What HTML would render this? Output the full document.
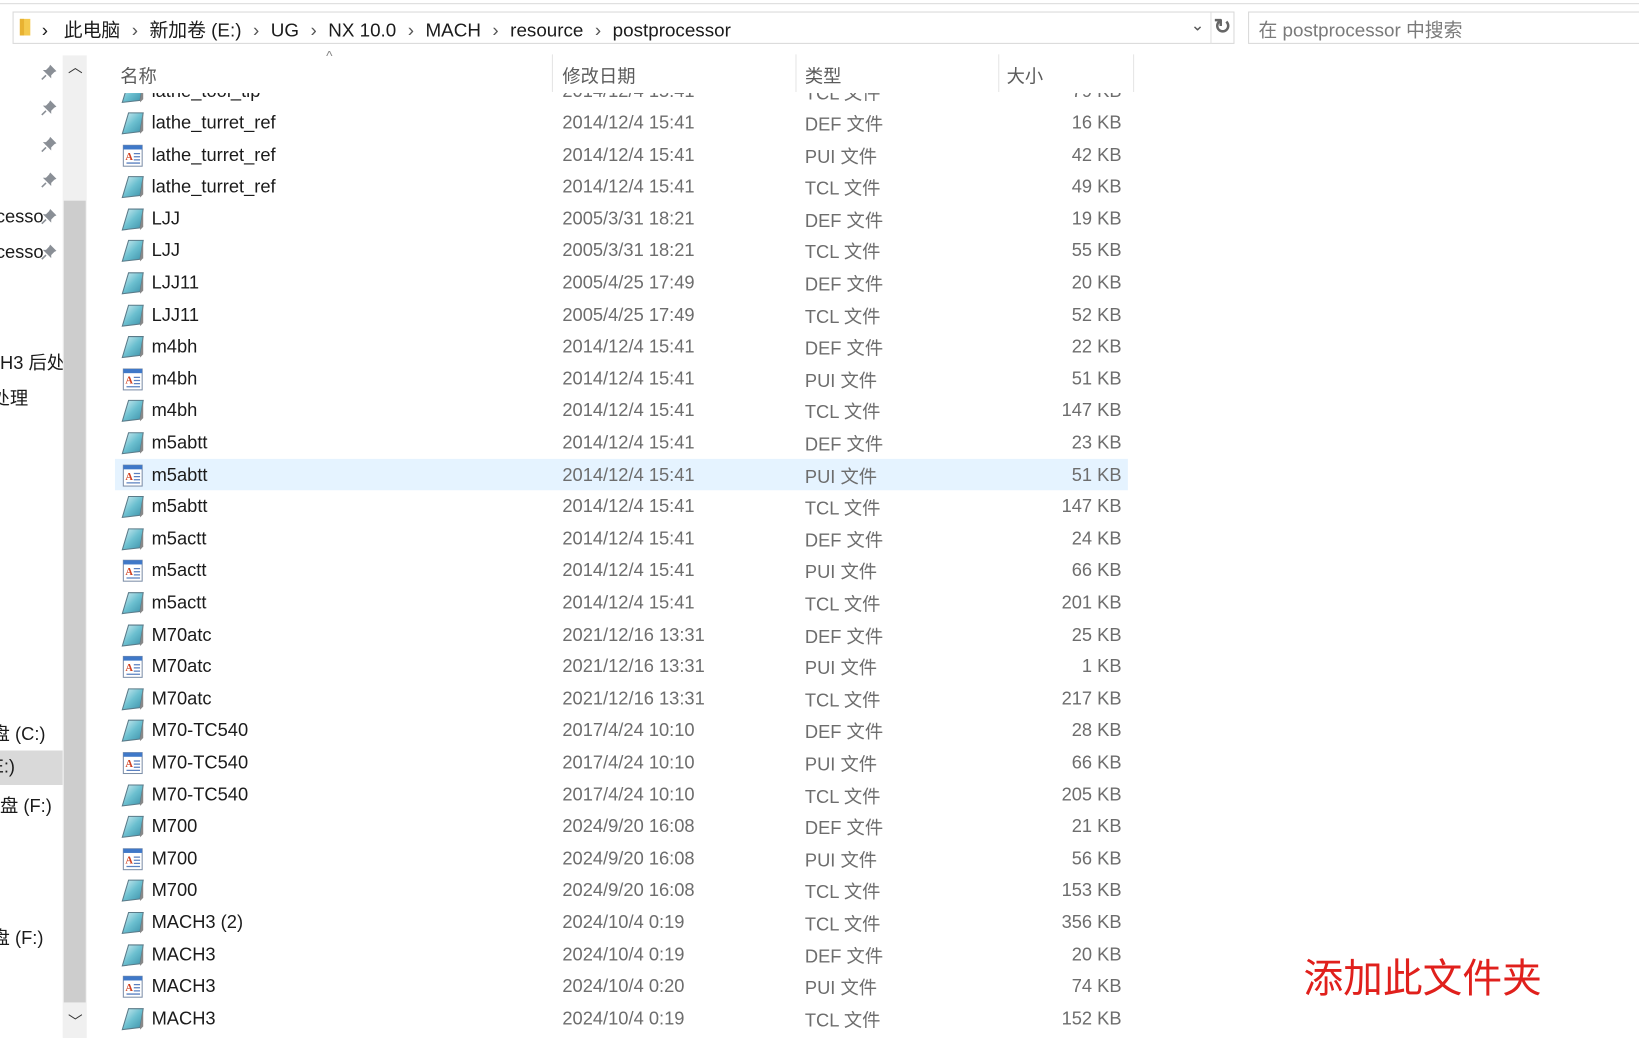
<!DOCTYPE html>
<html><head><meta charset="utf-8"><style>
html,body{margin:0;padding:0;background:#fff;overflow:hidden;width:1639px;height:1051px}
#w{position:absolute;left:0;top:0;width:1568px;height:1005px;overflow:hidden;transform:scale(1.04528);transform-origin:0 0;font-family:"Liberation Sans","Noto Sans CJK SC",sans-serif;}
.a{position:absolute;white-space:nowrap}
.r{position:absolute;left:0;width:1100px;height:30px;font-size:17.5px}
.r .n{position:absolute;left:145px;top:5px;color:#1b1b1b}
.r .d{position:absolute;left:538px;top:5px;color:#6d6d6d}
.r .t{position:absolute;left:770px;top:4px;color:#6d6d6d}
.r .s{position:absolute;right:27px;top:5px;color:#6d6d6d;text-align:right}
.r svg{position:absolute;left:115px;top:5px}
.sel{background:#e5f3ff;left:110px!important;width:969px!important}
.sel .n{left:35px}.sel .d{left:428px}.sel .t{left:660px}.sel svg{left:5px}.sel .s{right:6px}
.nav{position:absolute;left:0;font-size:17.5px;color:#1b1b1b}
.h{position:absolute;top:60px;font-size:17.5px;color:#5b5b5b}
</style></head><body><div id="w">
<svg width="0" height="0" style="position:absolute"><defs>
<symbol id="tc" viewBox="0 0 24 22"><linearGradient id="g1" x1="0" y1="0" x2="1" y2="1"><stop offset="0" stop-color="#d8f0f4"/><stop offset="0.5" stop-color="#6cc0d0"/><stop offset="1" stop-color="#3a8fa8"/></linearGradient><path d="M8 1 L22 1 L19 19 L2 21 Z" fill="url(#g1)" stroke="#5a7a88" stroke-width="1"/><path d="M22 1 L22 18 L19 21 L19 19Z" fill="#888"/></symbol>
<symbol id="pu" viewBox="0 0 22 22"><rect x="2" y="1" width="18" height="20" fill="#fff" stroke="#7d8fa8"/><rect x="2" y="1" width="18" height="4" fill="#3f78c8"/><text x="4" y="15" font-size="10" font-family="Liberation Serif" fill="#d04020" font-weight="bold">A</text><path d="M12 9h6M12 12h6M12 15h6M5 18h13" stroke="#5a80c0" stroke-width="1.2"/></symbol>
<symbol id="pin" viewBox="0 0 16 16"><path d="M9 1 L15 7 L13 8 L10 11 L10 14 L2 6 L5 6 L8 3 Z" fill="#8a8f96"/><path d="M5 11 L1 15" stroke="#8a8f96" stroke-width="1.5"/></symbol>
</defs></svg>
<div class="a" style="left:0;top:3px;width:1568px;height:1px;background:#dcdcdc"></div>
<div class="a" style="left:12px;top:11px;width:1169px;height:31px;border:1px solid #d9d9d9;box-sizing:border-box"></div>
<div class="a" style="left:1158px;top:12px;width:1px;height:30px;background:#e0e0e0"></div>
<div class="a" style="left:1194px;top:11px;width:380px;height:31px;border:1px solid #d9d9d9;box-sizing:border-box"></div>
<svg class="a" style="left:17px;top:16px" width="16" height="20"><path d="M2 2h10v16H2z" fill="#f4c94e"/><path d="M2 2h4v16H2z" fill="#e8b232"/></svg>
<div class="a" style="left:40px;top:15px;font-size:18px;color:#1b1b1b">› <span style="margin-left:10px">此电脑</span> <span style="color:#555;margin:0 6px">›</span> 新加卷 (E:) <span style="color:#555;margin:0 6px">›</span> UG <span style="color:#555;margin:0 6px">›</span> NX 10.0 <span style="color:#555;margin:0 6px">›</span> MACH <span style="color:#555;margin:0 6px">›</span> resource <span style="color:#555;margin:0 6px">›</span> postprocessor</div>
<div class="a" style="left:1139px;top:14px;font-size:16px;color:#555">⌄</div>
<div class="a" style="left:1161px;top:13px;font-size:20px;color:#666;font-weight:bold">↻</div>
<div class="a" style="left:1204px;top:15px;font-size:18px;color:#7a7a7a">在 postprocessor 中搜索</div>
<!-- nav -->
<div class="nav" style="top:197px;left:-4px">cesso</div><div class="nav" style="top:231px;left:-4px">cesso</div>
<svg class="a" style="left:39px;top:61px" width="16" height="16"><use href="#pin"/></svg>
<svg class="a" style="left:39px;top:95px" width="16" height="16"><use href="#pin"/></svg>
<svg class="a" style="left:39px;top:130px" width="16" height="16"><use href="#pin"/></svg>
<svg class="a" style="left:39px;top:164px" width="16" height="16"><use href="#pin"/></svg>
<svg class="a" style="left:39px;top:199px" width="16" height="16"><use href="#pin"/></svg>
<svg class="a" style="left:39px;top:233px" width="16" height="16"><use href="#pin"/></svg>
<div class="a" style="left:0;top:718px;width:60px;height:33px;background:#d9d9d9"></div>
<div class="nav" style="top:334px;left:0">H3 后处</div>
<div class="nav" style="top:368px;left:-8px">处理</div>
<div class="nav" style="top:689px;left:-8px">盘 (C:)</div>
<div class="nav" style="top:723px;left:-8px">E:)</div>
<div class="nav" style="top:758px;left:0">盘 (F:)</div>
<div class="nav" style="top:884px;left:-8px">盘 (F:)</div>
<div class="a" style="left:60px;top:53px;width:23px;height:940px;background:#f0f0f0"></div>
<div class="a" style="left:61px;top:192px;width:21px;height:767px;background:#cdcdcd"></div>
<div class="a" style="left:65px;top:54px;font-size:14px;color:#333">︿</div>
<div class="a" style="left:65px;top:967px;font-size:14px;color:#333">﹀</div>
<div class="a" style="left:95px;top:88px;width:1000px;height:918px;overflow:hidden">
<div style="position:absolute;left:-95px;top:-88px;width:1100px;height:1100px">
<div class="r" style="top:72px"><svg width="24" height="22"><use href="#tc"/></svg><span class="n">lathe_tool_tip</span><span class="d">2014/12/4 15:41</span><span class="t">TCL 文件</span><span class="s">79 KB</span></div>
ROWS
</div></div>
<div class="a" style="left:95px;top:52px;width:1000px;height:37px;background:#fff"></div>
<div class="h" style="left:115px">名称</div>
<div class="a" style="left:312px;top:46px;font-size:13px;color:#888">^</div>
<div class="h" style="left:538px">修改日期</div>
<div class="h" style="left:770px">类型</div>
<div class="h" style="left:963px">大小</div>
<div class="a" style="left:528px;top:52px;width:1px;height:36px;background:#e5e5e5"></div>
<div class="a" style="left:761px;top:52px;width:1px;height:36px;background:#e5e5e5"></div>
<div class="a" style="left:955px;top:52px;width:1px;height:36px;background:#e5e5e5"></div>
<div class="a" style="left:1084px;top:52px;width:1px;height:36px;background:#e5e5e5"></div>
<div class="a" style="left:1247px;top:905px;font-size:38px;color:#e0201c;font-family:'Noto Sans CJK SC',sans-serif">添加此文件夹</div>
</div>
<script>
var d=[["tc","lathe_turret_ref","2014/12/4 15:41","DEF","16"],["pu","lathe_turret_ref","2014/12/4 15:41","PUI","42"],["tc","lathe_turret_ref","2014/12/4 15:41","TCL","49"],["tc","LJJ","2005/3/31 18:21","DEF","19"],["tc","LJJ","2005/3/31 18:21","TCL","55"],["tc","LJJ11","2005/4/25 17:49","DEF","20"],["tc","LJJ11","2005/4/25 17:49","TCL","52"],["tc","m4bh","2014/12/4 15:41","DEF","22"],["pu","m4bh","2014/12/4 15:41","PUI","51"],["tc","m4bh","2014/12/4 15:41","TCL","147"],["tc","m5abtt","2014/12/4 15:41","DEF","23"],["pu","m5abtt","2014/12/4 15:41","PUI","51"],["tc","m5abtt","2014/12/4 15:41","TCL","147"],["tc","m5actt","2014/12/4 15:41","DEF","24"],["pu","m5actt","2014/12/4 15:41","PUI","66"],["tc","m5actt","2014/12/4 15:41","TCL","201"],["tc","M70atc","2021/12/16 13:31","DEF","25"],["pu","M70atc","2021/12/16 13:31","PUI","1"],["tc","M70atc","2021/12/16 13:31","TCL","217"],["tc","M70-TC540","2017/4/24 10:10","DEF","28"],["pu","M70-TC540","2017/4/24 10:10","PUI","66"],["tc","M70-TC540","2017/4/24 10:10","TCL","205"],["tc","M700","2024/9/20 16:08","DEF","21"],["pu","M700","2024/9/20 16:08","PUI","56"],["tc","M700","2024/9/20 16:08","TCL","153"],["tc","MACH3 (2)","2024/10/4 0:19","TCL","356"],["tc","MACH3","2024/10/4 0:19","DEF","20"],["pu","MACH3","2024/10/4 0:20","PUI","74"],["tc","MACH3","2024/10/4 0:19","TCL","152"]];
var h="";d.forEach(function(r,i){h+='<div class="r'+(i==11?' sel':'')+'" style="top:'+(102+i*30.6).toFixed(1)+'px"><svg width="24" height="22"><use href="#'+r[0]+'"/></svg><span class="n">'+r[1]+'</span><span class="d">'+r[2]+'</span><span class="t">'+r[3]+' 文件</span><span class="s">'+r[4]+' KB</span></div>';});
var c=document.querySelector('#w > div.a[style*="overflow:hidden"] > div');c.innerHTML=c.innerHTML.replace("ROWS",h);
</script>
</body></html>
